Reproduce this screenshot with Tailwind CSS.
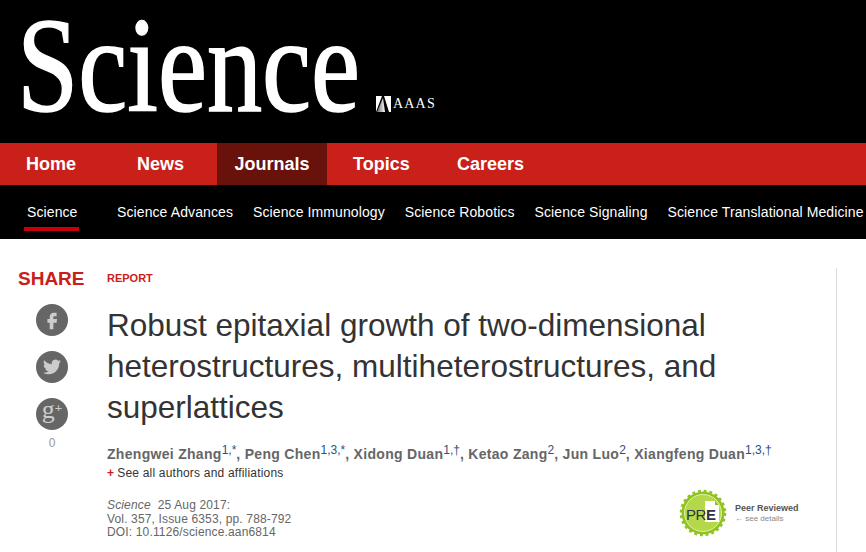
<!DOCTYPE html>
<html lang="en">
<head>
    <meta charset="UTF-8">
    <title>Robust epitaxial growth - Science</title>
    <script src="https://cdn.jsdelivr.net/npm/@tailwindcss/browser@4"></script>
</head>
<body class="bg-white font-['Liberation_Sans',Arial,sans-serif] overflow-hidden w-[866px] h-[552px]">
    <!-- Masthead -->
    <header class="bg-black h-[143px] flex items-start">
        <svg width="372" height="143" viewBox="0 0 372 143" class="shrink-0">
            <text x="17" y="111" font-family="Liberation Serif" font-size="136" fill="#fff" stroke="#fff" stroke-width="1.6" textLength="343" lengthAdjust="spacingAndGlyphs">Science</text>
        </svg>
        <div class="flex items-center gap-[2px] ml-[4px] mt-[96px]">
            <svg width="15" height="16" viewBox="0 0 15 16">
                <defs><linearGradient id="aaasFade" x1="0" x2="1"><stop offset="0" stop-color="#666"/><stop offset="1" stop-color="#fff"/></linearGradient></defs>
                <rect width="15" height="16" fill="#fff"/>
                <path d="M0 16 L6 0 H8 L13 16 Z" fill="#000"/>
                <path d="M1 16 L7 2 L9 16 Z" fill="url(#aaasFade)"/>
            </svg>
            <span class="font-['Liberation_Serif',serif] text-white text-[14px] leading-[16px] tracking-[1.2px]">AAAS</span>
        </div>
    </header>

    <!-- Main nav -->
    <nav class="bg-[#c9211a] h-[42px] flex text-white font-bold text-[18px] leading-[42px]">
        <a class="pl-[26px] w-[137px]">Home</a>
        <a class="w-[80px]">News</a>
        <a class="bg-[#69110b] w-[110px] text-center">Journals</a>
        <a class="pl-[26px] w-[130px]">Topics</a>
        <a>Careers</a>
    </nav>

    <!-- Journals nav -->
    <nav class="bg-black h-[54px] flex items-start pl-[24px] gap-[20px] text-white text-[14px] leading-[16px] tracking-[.1px] whitespace-nowrap pt-[19px]">
        <a class="px-[3px] w-[55px] h-[27px] border-b-[4px] border-[#c8000a] mr-[18px]">Science</a>
        <a>Science Advances</a>
        <a>Science Immunology</a>
        <a>Science Robotics</a>
        <a>Science Signaling</a>
        <a>Science Translational Medicine</a>
    </nav>

    <!-- Article -->
    <main class="flex pt-[29px]">
        <aside class="w-[107px] pl-[18px] shrink-0">
            <h3 class="text-[#c9211a] font-bold text-[19px] leading-[22px]">SHARE</h3>
            <div class="w-[68px] flex flex-col items-center gap-[15px] mt-[14px]">
                <a class="w-[32px] h-[32px] rounded-full bg-[#666] flex items-center justify-center">
                    <svg width="22" height="22" viewBox="0 0 24 24" fill="#ccc"><path d="M14 8h3V4h-3c-2.8 0-4.5 2-4.5 4.7V11H7v4h2.5v7h4v-7H17l.5-4h-4V8.8c0-.5.2-.8.5-.8z"/></svg>
                </a>
                <a class="w-[32px] h-[32px] rounded-full bg-[#666] flex items-center justify-center">
                    <svg width="18" height="18" viewBox="0 0 24 24" fill="#ccc"><path d="M23.953 4.57a10 10 0 01-2.825.775 4.958 4.958 0 002.163-2.723c-.951.555-2.005.959-3.127 1.184a4.92 4.92 0 00-8.384 4.482C7.69 8.095 4.067 6.13 1.64 3.162a4.822 4.822 0 00-.666 2.475c0 1.71.87 3.213 2.188 4.096a4.904 4.904 0 01-2.228-.616v.06a4.923 4.923 0 003.946 4.827 4.996 4.996 0 01-2.212.085 4.936 4.936 0 004.604 3.417 9.867 9.867 0 01-6.102 2.105c-.39 0-.779-.023-1.17-.067a13.995 13.995 0 007.557 2.209c9.053 0 13.998-7.496 13.998-13.985 0-.21 0-.42-.015-.63A9.935 9.935 0 0024 4.59z"/></svg>
                </a>
                <a class="w-[32px] h-[32px] rounded-full bg-[#666] flex items-start justify-center text-[#ccc] font-['Liberation_Serif',serif] leading-none">
                    <span class="text-[26px] -mt-[1px]">g</span><span class="text-[13px] font-bold mt-[3px]">+</span>
                </a>
            </div>
            <div class="w-[68px] text-center text-[#999] text-[12px] leading-[14px] mt-[6px]">0</div>
        </aside>

        <article class="w-[730px] h-[290px] border-r border-[#ddd] pr-[36px]">
            <div class="text-[#c9211a] font-bold text-[11px] leading-[18px] mt-[1px] uppercase">Report</div>
            <h1 class="text-[#333] text-[31.5px] leading-[41px] mt-[18px] w-[660px]">Robust epitaxial growth of two-dimensional heterostructures, multiheterostructures, and superlattices</h1>
            <p class="text-[#666] font-bold text-[14px] leading-[18px] tracking-[.3px] mt-[17px] whitespace-nowrap">Zhengwei Zhang<sup class="text-[#2a4f86] font-normal text-[12px] tracking-normal top-[-5px]">1,*</sup>, Peng Chen<sup class="text-[#2a4f86] font-normal text-[12px] tracking-normal top-[-5px]">1,3,*</sup>, Xidong Duan<sup class="text-[#2a4f86] font-normal text-[12px] tracking-normal top-[-5px]">1,†</sup>, Ketao Zang<sup class="text-[#2a4f86] font-normal text-[12px] tracking-normal top-[-5px]">2</sup>, Jun Luo<sup class="text-[#2a4f86] font-normal text-[12px] tracking-normal top-[-5px]">2</sup>, Xiangfeng Duan<sup class="text-[#2a4f86] font-normal text-[12px] tracking-normal top-[-5px]">1,3,†</sup></p>
            <p class="text-[#333] text-[12px] leading-[14px] tracking-[.2px] mt-[3px]"><span class="text-[#c9211a] font-bold mr-[3px]">+</span>See all authors and affiliations</p>
            <div class="flex justify-between items-start mt-[9px]">
                <div class="text-[#666] text-[12px] leading-[13.5px] tracking-[.15px] mt-[10px]">
                    <div><em>Science</em>&nbsp; 25 Aug 2017:</div>
                    <div>Vol. 357, Issue 6353, pp. 788-792</div>
                    <div>DOI: 10.1126/science.aan6814</div>
                </div>
                <div class="flex items-center gap-[8px] w-[121px]">
                    <svg width="48" height="48" viewBox="0 0 48 48" class="shrink-0">
                        <circle cx="24" cy="24" r="21.5" fill="#8fc31f" stroke="#8fc31f" stroke-width="3.5" stroke-dasharray="2.8 2.83"/>
                        <circle cx="24" cy="24" r="18.5" fill="#b5d84a" stroke="#e2efb0" stroke-width="1"/>
                        <path d="M26 12h10l4 4v17H26z" fill="#fff"/>
                        <path d="M36 12l4 4h-4z" fill="#8fc31f"/>
                        <text x="7" y="31" font-family="Liberation Sans" font-size="15" letter-spacing="-.6" fill="#2e3340">PR</text>
                        <text x="27" y="31" font-family="Liberation Sans" font-size="15" font-weight="bold" fill="#2e3340">E</text>
                    </svg>
                    <div class="whitespace-nowrap">
                        <div class="text-[#555] font-bold text-[9px] leading-[11px]">Peer Reviewed</div>
                        <div class="text-[#888] text-[8px] leading-[9px]">← see details</div>
                    </div>
                </div>
            </div>
        </article>
    </main>
</body>
</html>
